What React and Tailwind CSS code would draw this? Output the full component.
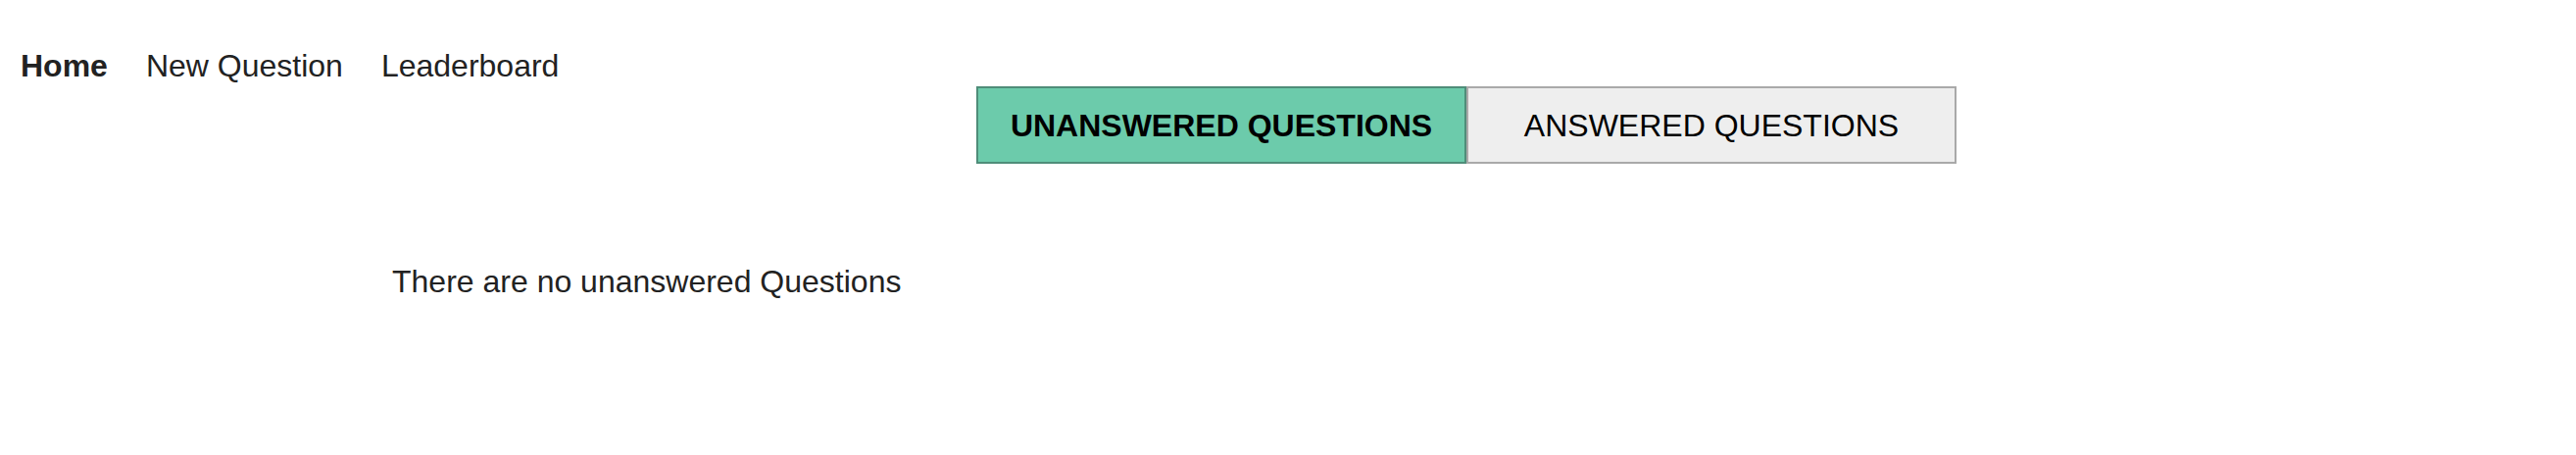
import { useState } from "react";

const font = { fontFamily: '"Liberation Sans", Arial, sans-serif' };

export default function App() {
  const [tab, setTab] = useState("unanswered");

  return (
    <div className="min-h-[464px] w-full bg-white text-[#222]" style={font}>
      {/* Nav */}
      <nav className="flex items-center gap-[39px] pl-[21px] pt-[49px] text-[32px] leading-[37px]">
        <a className="font-bold text-[#222]">Home</a>
        <a className="text-[#222]">New Question</a>
        <a className="text-[#222]">Leaderboard</a>
      </nav>

      {/* Tabs */}
      <div className="mt-[2px] ml-[996px] flex">
        <button
          onClick={() => setTab("unanswered")}
          className={`h-[79px] w-[500px] border-2 text-[32px] text-black ${
            tab === "unanswered"
              ? "border-[#4f8d79] bg-[#6ccbab] font-bold"
              : "border-[#a9a9a9] bg-[#eeeeee]"
          }`}
        >
          UNANSWERED QUESTIONS
        </button>
        <button
          onClick={() => setTab("answered")}
          className={`h-[79px] w-[500px] border-2 text-[32px] text-black ${
            tab === "answered"
              ? "border-[#4f8d79] bg-[#6ccbab] font-bold"
              : "border-[#a9a9a9] bg-[#eeeeee]"
          }`}
        >
          ANSWERED QUESTIONS
        </button>
      </div>

      {/* Empty state */}
      <p className="mt-[102px] ml-[400px] text-[32px] leading-[37px] text-[#222]">
        There are no {tab} Questions
      </p>
    </div>
  );
}
